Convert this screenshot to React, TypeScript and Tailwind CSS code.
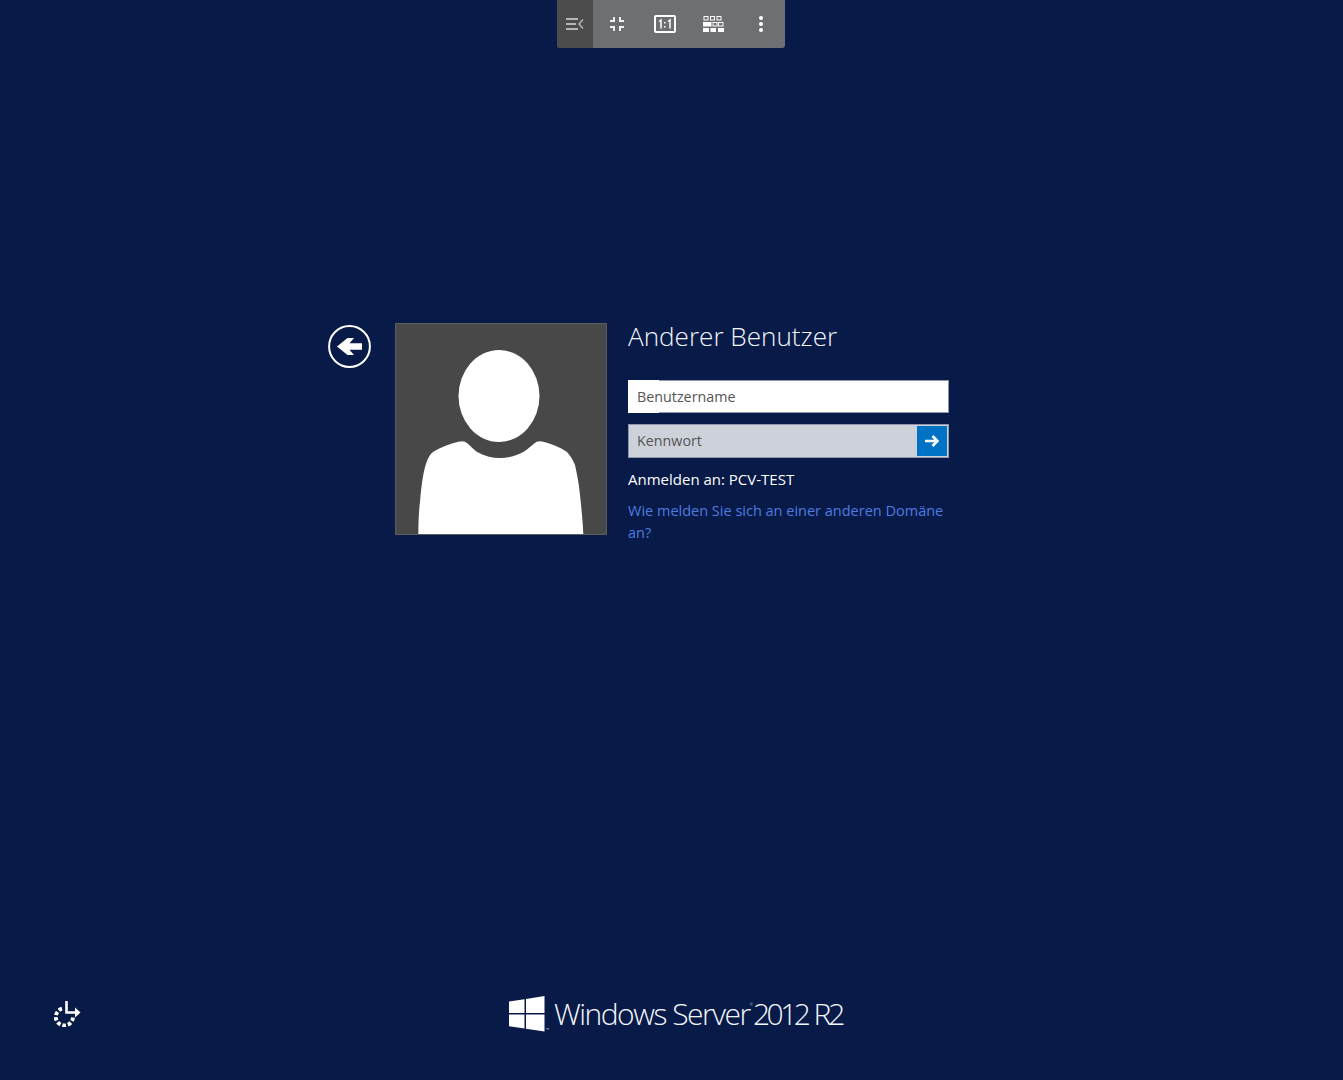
import React from "react";

const sans = "font-['Open_Sans','Noto_Sans',sans-serif]";

function Toolbar() {
  return (
    <div className="absolute left-[557px] top-0 flex h-[48px] w-[228px] overflow-hidden rounded-b-[3px] bg-[#6e6f72]">
      <div className="flex w-[36px] items-center justify-center bg-[#4c4c4c]">
        <svg width="18" height="12" viewBox="0 0 18 12" fill="none" stroke="#b4b4b4" strokeWidth="1.8">
          <path d="M0 1h12M0 6h10M0 11h12" />
          <path d="M17 1.5l-4 4.5 4 4.5" strokeWidth="1.6" />
        </svg>
      </div>
      <div className="flex w-[48px] items-center justify-center">
        <svg width="14" height="14" viewBox="0 0 14 14" fill="none" stroke="#f2f2f2" strokeWidth="2">
          <path d="M0 4h4V0M10 0v4h4M0 10h4v4M10 14v-4h4" />
        </svg>
      </div>
      <div className="flex w-[48px] items-center justify-center">
        <svg width="22" height="18" viewBox="0 0 22 18" fill="none">
          <rect x="1" y="1" width="20" height="16" rx="1" stroke="#fff" strokeWidth="2" />
          <path d="M5 6.5l2-1.5v8.5M14 6.5l2-1.5v8.5" stroke="#fff" strokeWidth="1.5" />
          <path d="M10.8 7v1.6M10.8 11v1.6" stroke="#fff" strokeWidth="1.5" />
        </svg>
      </div>
      <div className="flex w-[48px] items-center justify-center">
        <svg width="21" height="16" viewBox="0 0 21 16" fill="none">
          <g stroke="#fff" strokeWidth="1">
            <rect x="1" y="0.5" width="4" height="3.5" />
            <rect x="7.5" y="0.5" width="4" height="3.5" />
            <rect x="14" y="0.5" width="4" height="3.5" />
            <rect x="10" y="6.5" width="4" height="3.5" />
            <rect x="15.5" y="6.5" width="4.5" height="3.5" />
          </g>
          <g fill="#fff">
            <rect x="0" y="6" width="8.5" height="4.5" />
            <rect x="0" y="12" width="6" height="4" />
            <rect x="7.5" y="12" width="5.5" height="4" />
            <rect x="15" y="12" width="6" height="4" />
          </g>
        </svg>
      </div>
      <div className="flex w-[48px] items-center justify-center">
        <svg width="6" height="16" viewBox="0 0 6 16" fill="#fff">
          <circle cx="3" cy="2" r="2" />
          <circle cx="3" cy="8" r="2" />
          <circle cx="3" cy="14" r="2" />
        </svg>
      </div>
    </div>
  );
}

function BackButton() {
  return (
    <svg width="43" height="43" viewBox="0 0 43 43" fill="none" className="mt-[2px] block shrink-0">
      <circle cx="21.5" cy="21.5" r="20.4" stroke="#fff" strokeWidth="2" />
      <path d="M34 18.3H21.5L26 13H19.5L9 21.5 19.5 30H26l-4.5-5.3H34z" fill="#fff" />
    </svg>
  );
}

function Avatar() {
  return (
    <div className="ml-[24px] h-[212px] w-[212px] shrink-0 border border-[#5c5c5c] bg-[#484848]">
      <svg width="210" height="210" viewBox="0 0 210 210" className="block">
        <ellipse cx="103" cy="72" rx="40.5" ry="46" fill="#fff" />
        <path
          d="M22.3 210 C22.5 195 23 185 24 178 C25.5 160 27.5 146 30.7 137.7 C32.5 133 34.5 130 37.3 127.7 C45 123 54 120 62.3 117.7 C65 117 67 117 69 117.7 C73 120 76 124 80.7 127.7 C88 132 96 134 104 134 C112 134 120 132 127.3 128 C132 125 136 121 140.7 117.7 C143 117 145 117 147.3 117.7 C155 120 164 123 170.7 127.7 C174 131 177 136 179 141 C181 150 183 160 184 171 C185.5 185 186.8 198 187.3 210 Z"
          fill="#fff"
        />
      </svg>
    </div>
  );
}

function LoginForm() {
  return (
    <div className={`ml-[21px] w-[321px] ${sans}`}>
      <h1 className="text-[26.1px] font-light leading-[26px] text-[#f2f4f8]">Anderer Benutzer</h1>
      <div className="relative mt-[31px] flex h-[33px] items-center border-y border-r border-[#8f97ad] bg-white pl-[9px]">
        <div className="absolute -bottom-px -top-px left-0 w-[31px] bg-white" />
        <span className="relative text-[14.3px] text-[#555]">Benutzername</span>
      </div>
      <div className="mt-[11px] flex h-[34px] items-center justify-between border border-[#8f97ad] bg-[#cdd1da] pl-[8px] pr-px">
        <span className="text-[14.3px] text-[#555]">Kennwort</span>
        <div className="flex h-[30px] w-[30px] items-center justify-center bg-[#0072c6]">
          <svg width="14" height="12" viewBox="0 0 14 12" fill="none" stroke="#fff" strokeWidth="2.6">
            <path d="M0 6h12M7.5 1l5 5-5 5" />
          </svg>
        </div>
      </div>
      <p className="mt-[10px] text-[15px] leading-[22px] text-white">Anmelden an: PCV-TEST</p>
      <p className="mt-[10px] text-[14.5px] leading-[22px] text-[#4f7ae0]">Wie melden Sie sich an einer anderen Domäne an?</p>
    </div>
  );
}

function AccessIcon() {
  return (
    <svg width="28" height="27" viewBox="0 0 28 27" fill="none" stroke="#fff" className="block">
      <path d="M13.5 1v11.5H23" strokeWidth="2.6" />
      <path d="M22 7.5l5.5 5-5.5 5z" fill="#fff" stroke="none" />
      <path d="M9 8.6a8.6 8.6 0 1 0 11 8" strokeWidth="3.8" strokeDasharray="3.6 2" />
    </svg>
  );
}

function Logo() {
  return (
    <div className="relative flex items-center">
      <svg width="36" height="36" viewBox="0 0 36 36" className="shrink-0">
        <path d="M0 5.5 15.5 3.2V17H0zM17 3 35.5 0V17H17zM0 18.5H15.5V32.5L0 30.2zM17 18.5H35.5V35.5L17 32.8z" fill="#fff" />
      </svg>
      <span className={`absolute left-[37px] top-[32px] text-[4px] leading-none text-[#dfe3ec] ${sans}`}>™</span>
      <div className={`ml-[9px] flex items-baseline whitespace-nowrap text-[30px] font-light leading-none text-[#f4f6fa] ${sans}`}>
        <span className="tracking-[-1.5px]">Windows Server</span>
        <span className="self-start pt-[4px] text-[4px]">®</span>
        <span className="tracking-[-3.5px]">2012</span>
        <span className="ml-[6px] tracking-[-3px]">R2</span>
      </div>
    </div>
  );
}

export default function App() {
  return (
    <div className="relative flex h-[1080px] w-full flex-col overflow-hidden bg-[#081a47]">
      <Toolbar />
      <main className="flex pl-[328px] pt-[323px]">
        <BackButton />
        <Avatar />
        <LoginForm />
      </main>
      <footer className="mb-[42px] mt-auto flex h-[48px] items-center">
        <div className="ml-[53px] w-[456px] -translate-y-[1px]">
          <AccessIcon />
        </div>
        <Logo />
      </footer>
    </div>
  );
}
